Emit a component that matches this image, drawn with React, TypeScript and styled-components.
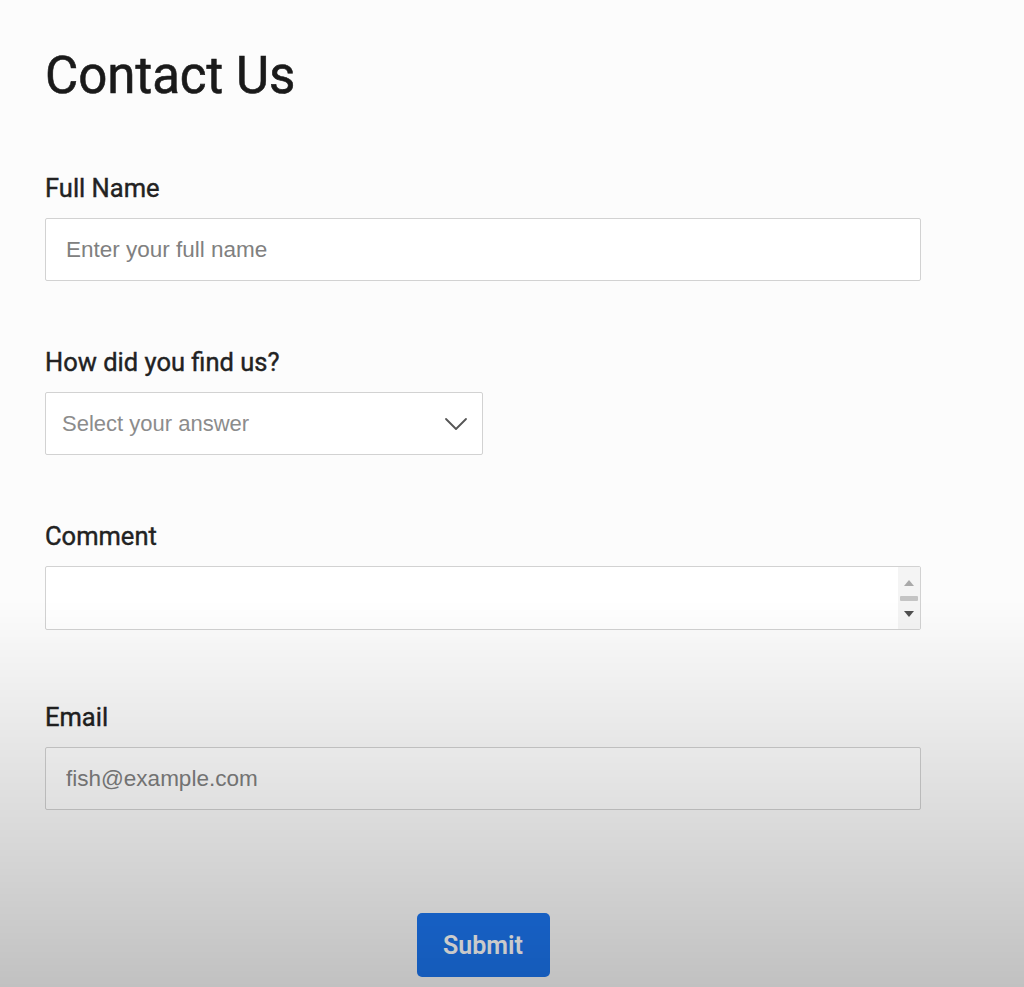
import React from 'react';
import styled, { createGlobalStyle } from 'styled-components';

const GlobalStyle = createGlobalStyle`
  html, body {
    margin: 0;
    padding: 0;
    background: #fcfcfc;
  }
  body {
    min-height: 100vh;
    font-family: Roboto, "Liberation Sans", Arial, sans-serif;
    color: #212121;
  }
  /* video-style shade that darkens the lower part of the frame */
  body::after {
    content: '';
    position: fixed;
    inset: 0;
    pointer-events: none;
    background: linear-gradient(
      to bottom,
      rgba(0, 0, 0, 0) 0px,
      rgba(0, 0, 0, 0) 600px,
      rgba(0, 0, 0, 0.07) 720px,
      rgba(0, 0, 0, 0.14) 840px,
      rgba(0, 0, 0, 0.23) 987px
    );
  }
`;

const Page = styled.main`
  padding: 0 0 10px 45px;
`;

const Title = styled.h1`
  margin: 46px 0 67px;
  font-size: 51px;
  line-height: 60px;
  font-weight: 400;
  color: #1a1a1a;
  -webkit-text-stroke: 0.6px #1a1a1a;
`;

const Form = styled.form`
  display: flex;
  flex-direction: column;
  width: 876px;
`;

const Field = styled.div<{ $after: number }>`
  display: flex;
  flex-direction: column;
  gap: 15px;
  margin-bottom: ${(p) => p.$after}px;
`;

const Label = styled.label`
  font-size: 25.5px;
  line-height: 30px;
  font-weight: 400;
  color: #222;
  -webkit-text-stroke: 0.4px #222;
`;

const TextInput = styled.input`
  box-sizing: border-box;
  width: 100%;
  height: 63px;
  padding: 0 20px;
  border: 1px solid #d2d2d2;
  border-radius: 2px;
  background: #fff;
  font-family: "Liberation Sans", Arial, sans-serif;
  font-size: 22.5px;
  color: #333;
  outline: none;

  &::placeholder {
    color: #808080;
  }
`;

const SelectBox = styled.button`
  box-sizing: border-box;
  width: 438px;
  height: 63px;
  display: flex;
  align-items: center;
  justify-content: space-between;
  padding: 0 14px 0 16px;
  border: 1px solid #d2d2d2;
  border-radius: 2px;
  background: #fff;
  cursor: pointer;
`;

const SelectText = styled.span`
  font-family: "Liberation Sans", Arial, sans-serif;
  font-size: 22px;
  color: #8c8c8c;
`;

const AreaBox = styled.div`
  box-sizing: border-box;
  width: 100%;
  height: 64px;
  display: flex;
  border: 1px solid #d2d2d2;
  border-radius: 2px;
  background: #fff;
  overflow: hidden;
`;

const Area = styled.textarea`
  flex: 1;
  border: none;
  resize: none;
  padding: 10px 20px;
  font-family: "Liberation Sans", Arial, sans-serif;
  font-size: 22px;
  outline: none;
  background: transparent;
`;

const ScrollTrack = styled.div`
  width: 22px;
  display: flex;
  flex-direction: column;
  align-items: center;
  justify-content: space-between;
  padding: 13px 0 12px;
  background: #f4f4f4;
`;

const Thumb = styled.div`
  width: 18px;
  height: 5px;
  border-radius: 1px;
  background: #c4c4c4;
`;

const Actions = styled.div`
  display: flex;
  justify-content: center;
`;

const SubmitButton = styled.button`
  width: 133px;
  height: 64px;
  border: none;
  border-radius: 5px;
  background: #1c76f0;
  color: #ffffff;
  font-family: Roboto, "Liberation Sans", Arial, sans-serif;
  font-size: 25px;
  font-weight: 600;
  cursor: pointer;
`;

const Chevron = () => (
  <svg width="24" height="14" viewBox="0 0 24 14" fill="none">
    <path d="M2 2l10 10L22 2" stroke="#555" strokeWidth="1.8" strokeLinecap="round" strokeLinejoin="round" />
  </svg>
);

const Arrow = ({ up, color }: { up?: boolean; color: string }) => (
  <svg width="10" height="6" viewBox="0 0 10 6">
    <path d={up ? 'M0 6L5 0L10 6Z' : 'M0 0L5 6L10 0Z'} fill={color} />
  </svg>
);

export default function App() {
  return (
    <>
      <GlobalStyle />
      <Page>
        <Title>Contact Us</Title>
        <Form onSubmit={(e) => e.preventDefault()}>
          <Field $after={66}>
            <Label htmlFor="fullName">Full Name</Label>
            <TextInput id="fullName" type="text" placeholder="Enter your full name" />
          </Field>

          <Field $after={66}>
            <Label>How did you find us?</Label>
            <SelectBox type="button">
              <SelectText>Select your answer</SelectText>
              <Chevron />
            </SelectBox>
          </Field>

          <Field $after={72}>
            <Label htmlFor="comment">Comment</Label>
            <AreaBox>
              <Area id="comment" rows={1} />
              <ScrollTrack>
                <Arrow up color="#a9a9a9" />
                <Thumb />
                <Arrow color="#4f4f4f" />
              </ScrollTrack>
            </AreaBox>
          </Field>

          <Field $after={103}>
            <Label htmlFor="email">Email</Label>
            <TextInput id="email" type="email" placeholder="fish@example.com" />
          </Field>

          <Actions>
            <SubmitButton type="submit">Submit</SubmitButton>
          </Actions>
        </Form>
      </Page>
    </>
  );
}
